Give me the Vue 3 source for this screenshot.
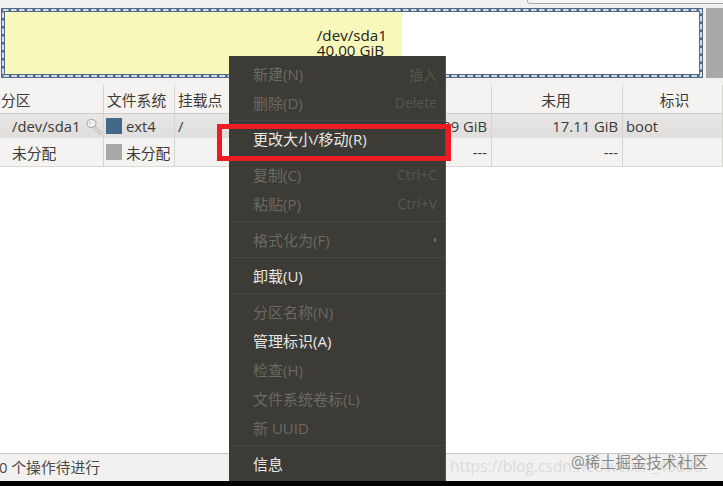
<script setup>
const cols = [104, 71, 55, 93, 169, 131, 100]
const track = cols.map(c => c + 'px').join(' ')
const menu = [
  [{ t: '新建(N)', k: '插入' }, { t: '删除(D)', k: 'Delete' }],
  [{ t: '更改大小/移动(R)', on: true }],
  [{ t: '复制(C)', k: 'Ctrl+C' }, { t: '粘贴(P)', k: 'Ctrl+V' }],
  [{ t: '格式化为(F)', arrow: true }],
  [{ t: '卸载(U)', on: true }],
  [{ t: '分区名称(N)' }, { t: '管理标识(A)', on: true }, { t: '检查(H)' }, { t: '文件系统卷标(L)' }, { t: '新 UUID' }],
  [{ t: '信息', on: true }],
]
</script>

<template>
  <div class="app">
    <div class="combo"></div>
    <div class="top">
      <div class="disk">
        <div class="used">
          <span class="name">/dev/sda1<br />40.00 GiB</span>
        </div>
        <svg class="dash" width="702" height="70" viewBox="0 0 702 70">
          <rect x="2" y="2" width="698" height="66" fill="none" stroke="#fff" stroke-width="1.5" stroke-dasharray="5.5 2.5" />
        </svg>
      </div>
      <div class="side"></div>
    </div>
    <div class="table">
      <div class="grid head" :style="{ gridTemplateColumns: track }">
        <div class="cell hl">分区</div>
        <div class="cell">文件系统</div>
        <div class="cell">挂载点</div>
        <div class="cell"></div>
        <div class="cell"></div>
        <div class="cell ctr unused">未用</div>
        <div class="cell ctr flags">标识</div>
      </div>
      <div class="grid row one" :style="{ gridTemplateColumns: track }">
        <div class="cell ind">/dev/sda1
          <svg class="key" viewBox="0 0 17 17" width="17" height="17">
            <ellipse cx="5.5" cy="5.5" rx="4.5" ry="4" fill="#f1f1ef" stroke="#aaa9a5" stroke-width="1.1" />
            <circle cx="4" cy="4.5" r="1" fill="#c4c3bf" />
            <path d="M8.5 8.2 L15.8 14.6 L14.2 16 L12.6 15 L11.8 13.4 L10.4 13 L7 9.5 Z" fill="#eeeeec" stroke="#aaa9a5" stroke-width="1" stroke-linejoin="round" />
          </svg>
        </div>
        <div class="cell fs"><i class="sw blue"></i>ext4</div>
        <div class="cell">/</div>
        <div class="cell"></div>
        <div class="cell right">89 GiB</div>
        <div class="cell right">17.11 GiB</div>
        <div class="cell">boot</div>
      </div>
      <div class="grid row two" :style="{ gridTemplateColumns: track }">
        <div class="cell ind">未分配</div>
        <div class="cell fs"><i class="sw gray"></i>未分配</div>
        <div class="cell"></div>
        <div class="cell"></div>
        <div class="cell right">---</div>
        <div class="cell right">---</div>
        <div class="cell"></div>
      </div>
    </div>
    <div class="blank"></div>
    <div class="status">0 个操作待进行</div>
    <div class="black"></div>

    <div class="menu">
      <div v-for="(group, g) in menu" :key="g" class="group">
        <div v-for="item in group" :key="item.t" class="item" :class="{ on: item.on }">
          <span>{{ item.t }}</span>
          <span v-if="item.k" class="k">{{ item.k }}</span>
          <span v-if="item.arrow" class="arrow"></span>
        </div>
      </div>
    </div>
    <div class="mark"></div>
    <div class="wm1">https://blog.csdn.net/weixin_43898</div>
    <div class="wm2">@稀土掘金技术社区</div>
  </div>
</template>

<style scoped>
.app {
  position: relative;
  width: 723px;
  height: 486px;
  overflow: hidden;
  background: #fff;
  font-family: "Open Sans", "Noto Sans CJK SC", sans-serif;
  font-size: 14.8px;
  color: #3c3b37;
}
.combo {
  position: absolute;
  left: 527px;
  right: -6px;
  top: -6px;
  height: 8px;
  border: 1px solid #a8a7a4;
  border-radius: 3px;
  background: #f6f5f4;
}
.top {
  height: 83px;
  box-sizing: border-box;
  padding: 8px 0 5px 1px;
  background: #f2f1f0;
  display: flex;
  gap: 3px;
}
.disk {
  position: relative;
  width: 702px;
  box-sizing: border-box;
  border: 4px solid #4f6a8a;
  background: #fff;
  display: flex;
}
.dash {
  position: absolute;
  left: -4px;
  top: -4px;
}
.used {
  width: 397px;
  background: #f8f8ba;
  display: flex;
  justify-content: flex-end;
  padding-right: 15px;
  box-sizing: border-box;
}
.name {
  margin-top: 16px;
  line-height: 15px;
  font-size: 15.2px;
  color: #222;
}
.side {
  width: 17px;
  background: #a8a8a8;
}
.grid { display: grid; }
.head {
  height: 31px;
  padding-top: 2px;
  background: #f4f3f2;
  border-bottom: 1px solid #cfcdca;
  box-sizing: border-box;
}
.cell {
  display: flex;
  align-items: center;
  padding-left: 3px;
  border-right: 1px solid #d6d4d1;
  box-sizing: border-box;
  white-space: nowrap;
  min-width: 0;
  overflow: hidden;
}
.hl { padding-left: 1px; }
.ctr { justify-content: center; padding: 0; }
.unused { padding-right: 2px; }
.flags { padding-left: 4px; }
.right { justify-content: flex-end; padding: 0 4px 0 0; }
.ind { padding-left: 12px; }
.fs { padding-left: 2px; }
.one {
  height: 24px;
  background: linear-gradient(#e8e7e5, #dfdedc);
}
.two {
  height: 29px;
  background: #f4f3f2;
  border-bottom: 1px solid #dbd9d6;
  box-sizing: border-box;
}
.key { margin-left: 6px; flex: none; }
.sw {
  width: 16px;
  height: 16px;
  margin-right: 4px;
  flex: none;
}
.blue { background: #44688a; }
.gray { background: #a8a8a8; }
.blank { height: 286px; }
.status {
  height: 28px;
  box-sizing: border-box;
  border-top: 1px solid #c9c7c4;
  background: #f2f1f0;
  line-height: 27px;
  text-indent: -1px;
  color: #4b4a46;
}
.black { height: 5px; background: #000; }
.menu {
  position: absolute;
  left: 229px;
  top: 56px;
  width: 217px;
  height: 425px;
  box-sizing: border-box;
  padding-top: 3px;
  background: #3c3b36;
  border-right: 1px solid #55544f;
  color: #6a6964;
}
.group {
  margin: 0 0 3px 3px;
  padding-bottom: 3px;
  border-bottom: 1px solid #494843;
}
.group:last-child { border: 0; }
.item {
  height: 29px;
  padding: 0 8px 0 21px;
  display: flex;
  align-items: center;
  justify-content: space-between;
  font-size: 15px;
}
.on { color: #e8e7e3; }
.k { font-size: 14px; color: #575651; }
.arrow {
  width: 0;
  height: 0;
  border-left: 3px solid #6a6964;
  border-top: 3px solid transparent;
  border-bottom: 3px solid transparent;
}
.mark {
  position: absolute;
  left: 217px;
  top: 124px;
  width: 234px;
  height: 37px;
  box-sizing: border-box;
  border: 5px solid #ed1c24;
}
.wm1 {
  position: absolute;
  left: 450px;
  top: 455px;
  font-size: 15.5px;
  color: #dcdbd9;
  white-space: nowrap;
}
.wm2 {
  position: absolute;
  left: 571px;
  top: 450px;
  font-size: 15.4px;
  color: #8b8a87;
  white-space: nowrap;
}
</style>
